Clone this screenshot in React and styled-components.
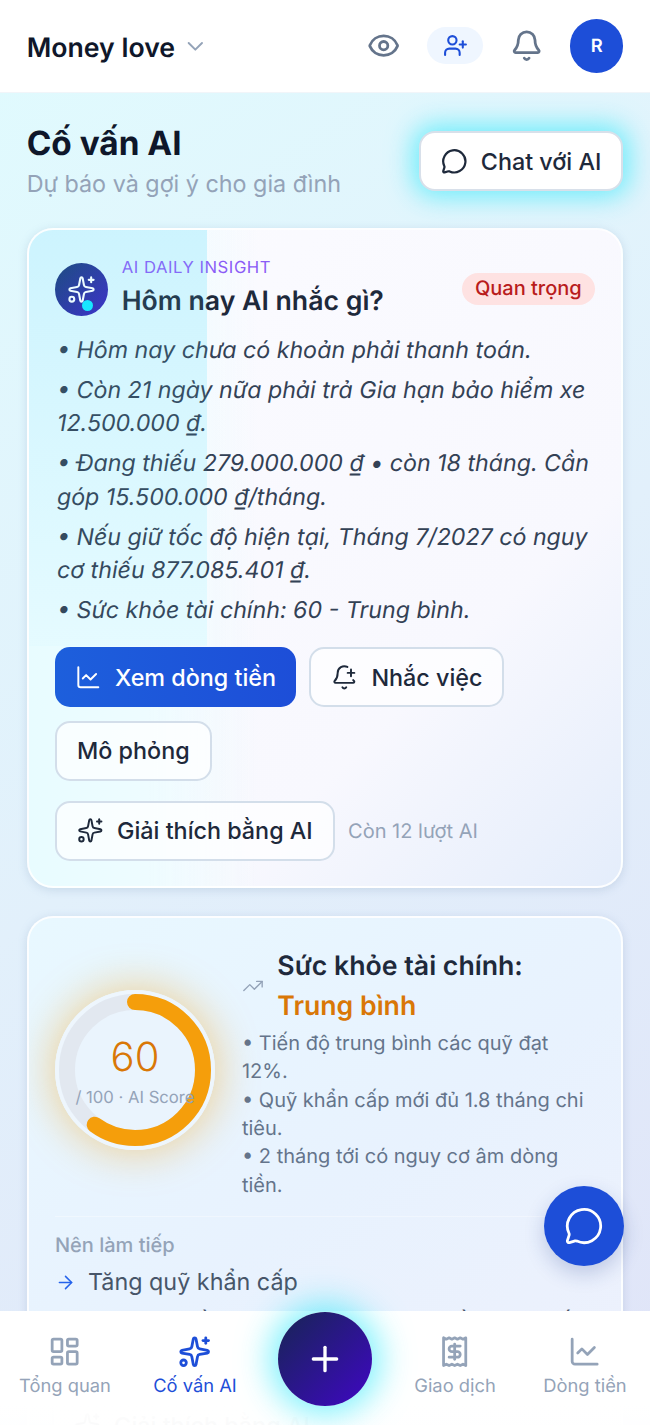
import React from 'react'
import styled, { createGlobalStyle } from 'styled-components'
import {
  ArrowRight,
  Bell,
  BellPlus,
  ChartLine,
  ChevronDown,
  Eye,
  LayoutDashboard,
  MessageCircle,
  Plus,
  Receipt,
  Sparkles,
  TrendingUp,
  UserPlus,
} from 'lucide-react'

const Global = createGlobalStyle`
  * { box-sizing: border-box; }
  html, body { margin: 0; padding: 0; }
  body {
    font-family: Inter, "Noto Sans", sans-serif;
    color: #0f172a;
    text-rendering: geometricPrecision;
  }
`

const Shell = styled.div`
  position: relative;
  width: 650px;
  height: 1425px;
  overflow: hidden;
  display: flex;
  flex-direction: column;
  background: linear-gradient(145deg, #e0fbfe 0%, #e2f0fb 50%, #e0e4f8 100%);
`

const Header = styled.header`
  flex: none;
  height: 93px;
  padding: 0 26.67px;
  display: flex;
  align-items: center;
  justify-content: space-between;
  background: #fff;
  border-bottom: 1px solid #f1f5f9;
`

const Brand = styled.div`
  display: flex;
  align-items: center;
  gap: 7px;
  padding-top: 3px;
  font-size: 26.67px;
  font-weight: 600;
  color: #0f172a;
  svg { color: #94a3b8; margin-top: -3px; }
`

const HeaderActions = styled.div`
  display: flex;
  align-items: center;
  gap: 26.67px;
`

const InviteButton = styled.div`
  width: 56px;
  height: 37px;
  border-radius: 19px;
  background: #eff6ff;
  color: #1d4ed8;
  display: flex;
  align-items: center;
  justify-content: center;
`

const Avatar = styled.div`
  width: 53.33px;
  height: 53.33px;
  border-radius: 50%;
  background: #1d4ed8;
  color: #fff;
  font-size: 18.33px;
  font-weight: 600;
  display: flex;
  align-items: center;
  justify-content: center;
`

const Main = styled.main`
  flex: 1;
  padding: 37px 26.67px 0;
  display: flex;
  flex-direction: column;
  gap: 28px;
`

const TitleRow = styled.div`
  display: flex;
  justify-content: space-between;
  align-items: flex-start;
`

const Title = styled.h1`
  margin: 0;
  font-size: 33.33px;
  line-height: 28px;
  font-weight: 700;
  color: #0f172a;
`

const Subtitle = styled.p`
  margin: 10px 0 0;
  font-size: 23.33px;
  line-height: 32px;
  color: #94a3b8;
`

const ChatButton = styled.button`
  margin-top: 1px;
  height: 60px;
  padding: 0 20px;
  display: flex;
  align-items: center;
  gap: 13.33px;
  font: 500 23.33px Inter, sans-serif;
  color: #1e293b;
  background: #fff;
  border: 2px solid #d8e0ea;
  border-radius: 16px;
  box-shadow: 0 0 26px 6px rgba(34, 232, 250, 0.6);
`

const Card = styled.section`
  position: relative;
  overflow: hidden;
  flex: none;
  border-radius: 26px;
  border: 2px solid rgba(255, 255, 255, 0.85);
  box-shadow: 0 2px 10px rgba(100, 130, 170, 0.22);
`

const InsightCard = styled(Card)`
  height: 660px;
  padding: 28px 26.33px 0;
  background:
    linear-gradient(180deg, #def7fe 0, #ebfcff 415px, rgba(235, 252, 255, 0) 416px) left top / 178px 100% no-repeat,
    linear-gradient(90deg, #e8fcff 0, #eefcff 120px, rgba(240, 252, 255, 0) 230px),
    linear-gradient(135deg, #fbfbff 0%, #f8f8fe 68%, #e4edfb 100%);
  /* the pale band in the reference also tints the text that lies under it */
  &::after {
    content: '';
    position: absolute;
    left: 0;
    top: 0;
    width: 178px;
    height: 416px;
    pointer-events: none;
    background: linear-gradient(180deg, rgba(80, 220, 255, 0.12) 0%, rgba(80, 220, 255, 0.04) 100%);
  }
`

const InsightHead = styled.div`
  display: flex;
  align-items: center;
  gap: 13.33px;
`

const AiBadge = styled.div`
  position: relative;
  flex: none;
  width: 53.33px;
  height: 53.33px;
  border-radius: 50%;
  background: linear-gradient(135deg, #173a72, #3b1fc4);
  color: #fff;
  display: flex;
  align-items: center;
  justify-content: center;
`

const BadgeDot = styled.span`
  position: absolute;
  right: 15px;
  bottom: 5px;
  width: 11px;
  height: 11px;
  border-radius: 50%;
  background: #12e8ff;
`

const HeadText = styled.div`
  flex: 1;
`

const Eyebrow = styled.div`
  font-size: 16.67px;
  line-height: 20px;
  color: #8b5cf6;
  letter-spacing: 0.55px;
`

const InsightTitle = styled.h2`
  margin: 3px 0 0;
  font-size: 26.67px;
  line-height: 40px;
  font-weight: 600;
  color: #1e293b;
`

const Tag = styled.span`
  margin-top: -2px;
  padding: 3.5px 13.33px;
  border-radius: 17px;
  background: #fee2e2;
  color: #b91c1c;
  font-size: 20px;
  font-weight: 500;
  line-height: 25px;
`

const Bullets = styled.div`
  margin-top: 13px;
  padding-left: 2px;
  font-size: 23.2px;
  font-style: italic;
  line-height: 33.33px;
  color: #334155;
  p { margin: 0 0 6.67px; }
  p:last-child { margin-bottom: 0; }
`

const ActionRow = styled.div`
  margin-top: 20px;
  display: flex;
  flex-wrap: wrap;
  align-items: center;
  gap: 13.33px;
`

const ActionButton = styled.button`
  height: 60px;
  padding: 0 20px;
  display: inline-flex;
  align-items: center;
  gap: 13.33px;
  font: 500 23.33px Inter, sans-serif;
  border-radius: 15px;
  color: ${p => (p.$primary ? '#fff' : '#1e293b')};
  background: ${p => (p.$primary ? 'linear-gradient(90deg, #1d5fdc, #1d4ed8)' : 'rgba(255,255,255,.7)')};
  border: ${p => (p.$primary ? 'none' : '2px solid #d3deea')};
`

const Quota = styled.span`
  font-size: 20px;
  color: #94a3b8;
`

const HealthCard = styled(Card)`
  height: 560px;
  padding: 28px 26.33px 0;
  background: linear-gradient(145deg, #e8f8ff 0%, #e8f2fe 50%, #eef0fc 100%);
`

const HealthTop = styled.div`
  display: flex;
  align-items: center;
  gap: 27px;
  padding-bottom: 17.5px;
  border-bottom: 1px solid rgba(255, 255, 255, 0.35);
`

const Gauge = styled.div`
  position: relative;
  flex: none;
  width: 160px;
  height: 160px;
  margin-bottom: 5px;
  border-radius: 50%;
  box-shadow: 0 0 40px 4px rgba(245, 158, 11, 0.4);
`

const GaugeText = styled.div`
  position: absolute;
  inset: 0;
  padding-top: 4px;
  display: flex;
  flex-direction: column;
  align-items: center;
  justify-content: center;
`

const Score = styled.div`
  font-size: 40px;
  line-height: 46px;
  font-weight: 300;
  color: #d97706;
`

const ScoreLabel = styled.div`
  font-size: 16.67px;
  line-height: 22px;
  margin-top: 7px;
  white-space: nowrap;
  color: #94a3b8;
`

const HealthInfo = styled.div`
  flex: 1;
`

const HealthHead = styled.div`
  display: flex;
  align-items: center;
  gap: 13.33px;
  svg { color: #94a3b8; flex: none; }
`

const HealthTitle = styled.h3`
  margin: 0;
  font-size: 26.67px;
  line-height: 40px;
  font-weight: 600;
  color: #1e293b;
  span { display: block; color: #d97706; }
`

const HealthList = styled.div`
  margin-top: 3px;
  font-size: 20px;
  line-height: 28.33px;
  color: #64748b;
  p { margin: 0; }
`

const NextLabel = styled.div`
  margin-top: 15px;
  font-size: 20px;
  line-height: 26px;
  font-weight: 500;
  color: #94a3b8;
`

const NextItem = styled.div`
  margin-top: 7px;
  display: flex;
  align-items: center;
  gap: 12px;
  font-size: 23.33px;
  line-height: 34px;
  color: #475569;
  svg { color: #2563eb; flex: none; }
`

const ExplainGhost = styled(ActionButton)`
  margin-top: 55px;
  margin-left: -3px;
`

const Fab = styled.button`
  position: absolute;
  right: 26px;
  top: 1186px;
  width: 80px;
  height: 80px;
  border: none;
  border-radius: 50%;
  background: #1d4ed8;
  color: #fff;
  display: flex;
  align-items: center;
  justify-content: center;
  box-shadow: 0 8px 20px rgba(30, 60, 140, 0.22);
`

const BottomNav = styled.nav`
  position: absolute;
  left: 0;
  right: 0;
  bottom: 0;
  height: 114px;
  display: grid;
  grid-template-columns: 130px 130px 1fr 130px 130px;
  background: linear-gradient(180deg, #fff 0%, #fff 80%, rgba(255, 255, 255, 0.975) 100%);
`

const NavItem = styled.div`
  padding-top: 24px;
  display: flex;
  flex-direction: column;
  align-items: center;
  gap: 6px;
  font-size: 18.33px;
  line-height: 24px;
  color: ${p => (p.$active ? '#1d4ed8' : '#94a3b8')};
`

const NavCenter = styled.div`
  display: flex;
  justify-content: center;
`

const AddButton = styled.button`
  width: 94px;
  height: 94px;
  margin-top: 1px;
  border: none;
  border-radius: 50%;
  background: linear-gradient(135deg, #172554, #3f07c4);
  color: #fff;
  display: flex;
  align-items: center;
  justify-content: center;
  box-shadow: 0 0 33px 8px rgba(34, 232, 250, 0.6);
`

const App = () => {
  return (
    <Shell>
      <Global />
      <Header>
        <Brand>
          Money love
          <ChevronDown size={26.67} strokeWidth={1.75} />
        </Brand>
        <HeaderActions>
          <Eye size={33.33} strokeWidth={2} color="#64748b" />
          <InviteButton>
            <UserPlus size={25} strokeWidth={2} />
          </InviteButton>
          <Bell size={33.33} strokeWidth={2} color="#64748b" />
          <Avatar>R</Avatar>
        </HeaderActions>
      </Header>
      <Main>
        <TitleRow>
          <div>
            <Title>Cố vấn AI</Title>
            <Subtitle>Dự báo và gợi ý cho gia đình</Subtitle>
          </div>
          <ChatButton>
            <MessageCircle size={26.67} strokeWidth={2} />
            Chat với AI
          </ChatButton>
        </TitleRow>

        <InsightCard>
          <InsightHead>
            <AiBadge>
              <Sparkles size={29} strokeWidth={1.75} />
              <BadgeDot />
            </AiBadge>
            <HeadText>
              <Eyebrow>AI DAILY INSIGHT</Eyebrow>
              <InsightTitle>Hôm nay AI nhắc gì?</InsightTitle>
            </HeadText>
            <Tag>Quan trọng</Tag>
          </InsightHead>
          <Bullets>
            <p>• Hôm nay chưa có khoản phải thanh toán.</p>
            <p>• Còn 21 ngày nữa phải trả Gia hạn bảo hiểm xe 12.500.000 ₫.</p>
            <p>• Đang thiếu 279.000.000 ₫ • còn 18 tháng. Cần góp 15.500.000 ₫/tháng.</p>
            <p>• Nếu giữ tốc độ hiện tại, Tháng 7/2027 có nguy cơ thiếu 877.085.401 ₫.</p>
            <p>• Sức khỏe tài chính: 60 - Trung bình.</p>
          </Bullets>
          <ActionRow>
            <ActionButton $primary>
              <ChartLine size={26.67} strokeWidth={1.75} />
              Xem dòng tiền
            </ActionButton>
            <ActionButton>
              <BellPlus size={26.67} strokeWidth={1.75} />
              Nhắc việc
            </ActionButton>
            <ActionButton>Mô phỏng</ActionButton>
          </ActionRow>
          <ActionRow>
            <ActionButton>
              <Sparkles size={26.67} strokeWidth={1.75} />
              Giải thích bằng AI
            </ActionButton>
            <Quota>Còn 12 lượt AI</Quota>
          </ActionRow>
        </InsightCard>

        <HealthCard>
          <HealthTop>
            <Gauge>
              <svg width="160" height="160" viewBox="0 0 160 160">
                <circle cx="80" cy="80" r="78" fill="#eaf4fd" stroke="#eef6fd" strokeWidth="4" />
                <circle cx="80" cy="80" r="68" fill="none" stroke="#e2e8f0" strokeWidth="16" />
                <circle
                  cx="80"
                  cy="80"
                  r="68"
                  fill="none"
                  stroke="#f59e0b"
                  strokeWidth="16"
                  strokeLinecap="round"
                  strokeDasharray={`${2 * Math.PI * 68 * 0.6} ${2 * Math.PI * 68}`}
                  transform="rotate(-90 80 80)"
                />
              </svg>
              <GaugeText>
                <Score>60</Score>
                <ScoreLabel>/ 100 · AI Score</ScoreLabel>
              </GaugeText>
            </Gauge>
            <HealthInfo>
              <HealthHead>
                <TrendingUp size={22} strokeWidth={1.5} />
                <HealthTitle>
                  Sức khỏe tài chính:
                  <span>Trung bình</span>
                </HealthTitle>
              </HealthHead>
              <HealthList>
                <p>• Tiến độ trung bình các quỹ đạt 12%.</p>
                <p>• Quỹ khẩn cấp mới đủ 1.8 tháng chi tiêu.</p>
                <p>• 2 tháng tới có nguy cơ âm dòng tiền.</p>
              </HealthList>
            </HealthInfo>
          </HealthTop>
          <NextLabel>Nên làm tiếp</NextLabel>
          <NextItem>
            <ArrowRight size={21} strokeWidth={1.75} />
            Tăng quỹ khẩn cấp
          </NextItem>
          <NextItem>
            <ArrowRight size={21} strokeWidth={1.75} />
            Giữ lại nhiều hơn cho các tháng đầu năm đến
          </NextItem>
          <ExplainGhost>
            <Sparkles size={26.67} strokeWidth={1.75} />
            Giải thích bằng AI
          </ExplainGhost>
        </HealthCard>
      </Main>

      <Fab>
        <MessageCircle size={40} strokeWidth={1.67} />
      </Fab>

      <BottomNav>
        <NavItem>
          <LayoutDashboard size={33.33} strokeWidth={2} />
          Tổng quan
        </NavItem>
        <NavItem $active>
          <Sparkles size={33.33} strokeWidth={2} />
          Cố vấn AI
        </NavItem>
        <NavCenter>
          <AddButton>
            <Plus size={40} strokeWidth={2} />
          </AddButton>
        </NavCenter>
        <NavItem>
          <Receipt size={33.33} strokeWidth={2} />
          Giao dịch
        </NavItem>
        <NavItem>
          <ChartLine size={33.33} strokeWidth={2} />
          Dòng tiền
        </NavItem>
      </BottomNav>
    </Shell>
  )
}

export default App
